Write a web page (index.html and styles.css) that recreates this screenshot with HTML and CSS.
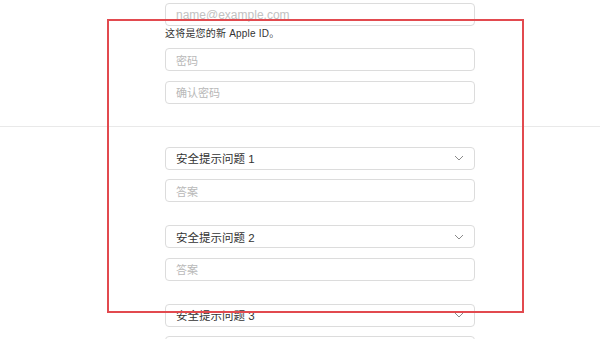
FILE: index.html
```html
<!DOCTYPE html>
<html lang="zh-CN">
<head>
  <meta charset="UTF-8" />
  <meta name="viewport" content="width=device-width, initial-scale=1.0"/>
  <title>创建您的 Apple ID</title>
  <link rel="stylesheet" href="styles.css">
</head>
<body>
  <section class="account">
    <div class="col">
      <div class="field"><span class="placeholder email">name@example.com</span></div>
      <p class="hint">这将是您的新 Apple ID。</p>
      <div class="field first"><span class="placeholder">密码</span></div>
      <div class="field"><span class="placeholder">确认密码</span></div>
    </div>
  </section>

  <hr class="divider">

  <section class="security">
    <div class="col">
      <div class="group">
        <div class="field select">安全提示问题 1
          <svg class="chevron" width="10" height="6" viewBox="0 0 10 6"><path d="M1 1l4 4 4-4" fill="none" stroke="#8a8a8a" stroke-width="1"/></svg>
        </div>
        <div class="field"><span class="placeholder">答案</span></div>
      </div>
      <div class="group">
        <div class="field select">安全提示问题 2
          <svg class="chevron" width="10" height="6" viewBox="0 0 10 6"><path d="M1 1l4 4 4-4" fill="none" stroke="#8a8a8a" stroke-width="1"/></svg>
        </div>
        <div class="field"><span class="placeholder">答案</span></div>
      </div>
      <div class="group">
        <div class="field select">安全提示问题 3
          <svg class="chevron" width="10" height="6" viewBox="0 0 10 6"><path d="M1 1l4 4 4-4" fill="none" stroke="#8a8a8a" stroke-width="1"/></svg>
        </div>
        <div class="field"><span class="placeholder">答案</span></div>
      </div>
    </div>
  </section>

  <div class="highlight"></div>
</body>
</html>
```

FILE: styles.css
```css
* { box-sizing: border-box; }
body {
  font-family: 'Liberation Sans', 'Noto Sans CJK SC', sans-serif;
  margin: 0;
  background: #fff;
  color: #333;
  height: 339px;
  overflow: hidden;
  position: relative;
}
.col {
  width: 310px;
  margin-left: 165px;
  display: flex;
  flex-direction: column;
}
.account { padding-top: 3px; }
.field {
  height: 23px;
  border: 1px solid #dcdcdc;
  border-radius: 4px;
  background: #fff;
  display: flex;
  align-items: center;
  padding: 0 10px;
  font-size: 11.5px;
  color: #333;
}
.field + .field { margin-top: 9.5px; }
.field.first { margin-top: 7px; }
.placeholder { color: #b8b8b8; font-size: 11px; }
.placeholder.email { font-size: 12px; color: #c2c2c2; }
.hint {
  margin: 1px 0 0;
  font-size: 10px;
  line-height: 14px;
  color: #333;
  letter-spacing: 0.2px;
}
.divider {
  border: 0;
  border-top: 1px solid #e9e9e9;
  margin: 22px 0 0;
}
.security { padding-top: 20px; }
.group + .group { margin-top: 23px; }
.select { justify-content: space-between; }
.highlight {
  position: absolute;
  left: 107px;
  top: 19px;
  width: 417px;
  height: 294px;
  border: 2px solid #e24a4f;
}
```
